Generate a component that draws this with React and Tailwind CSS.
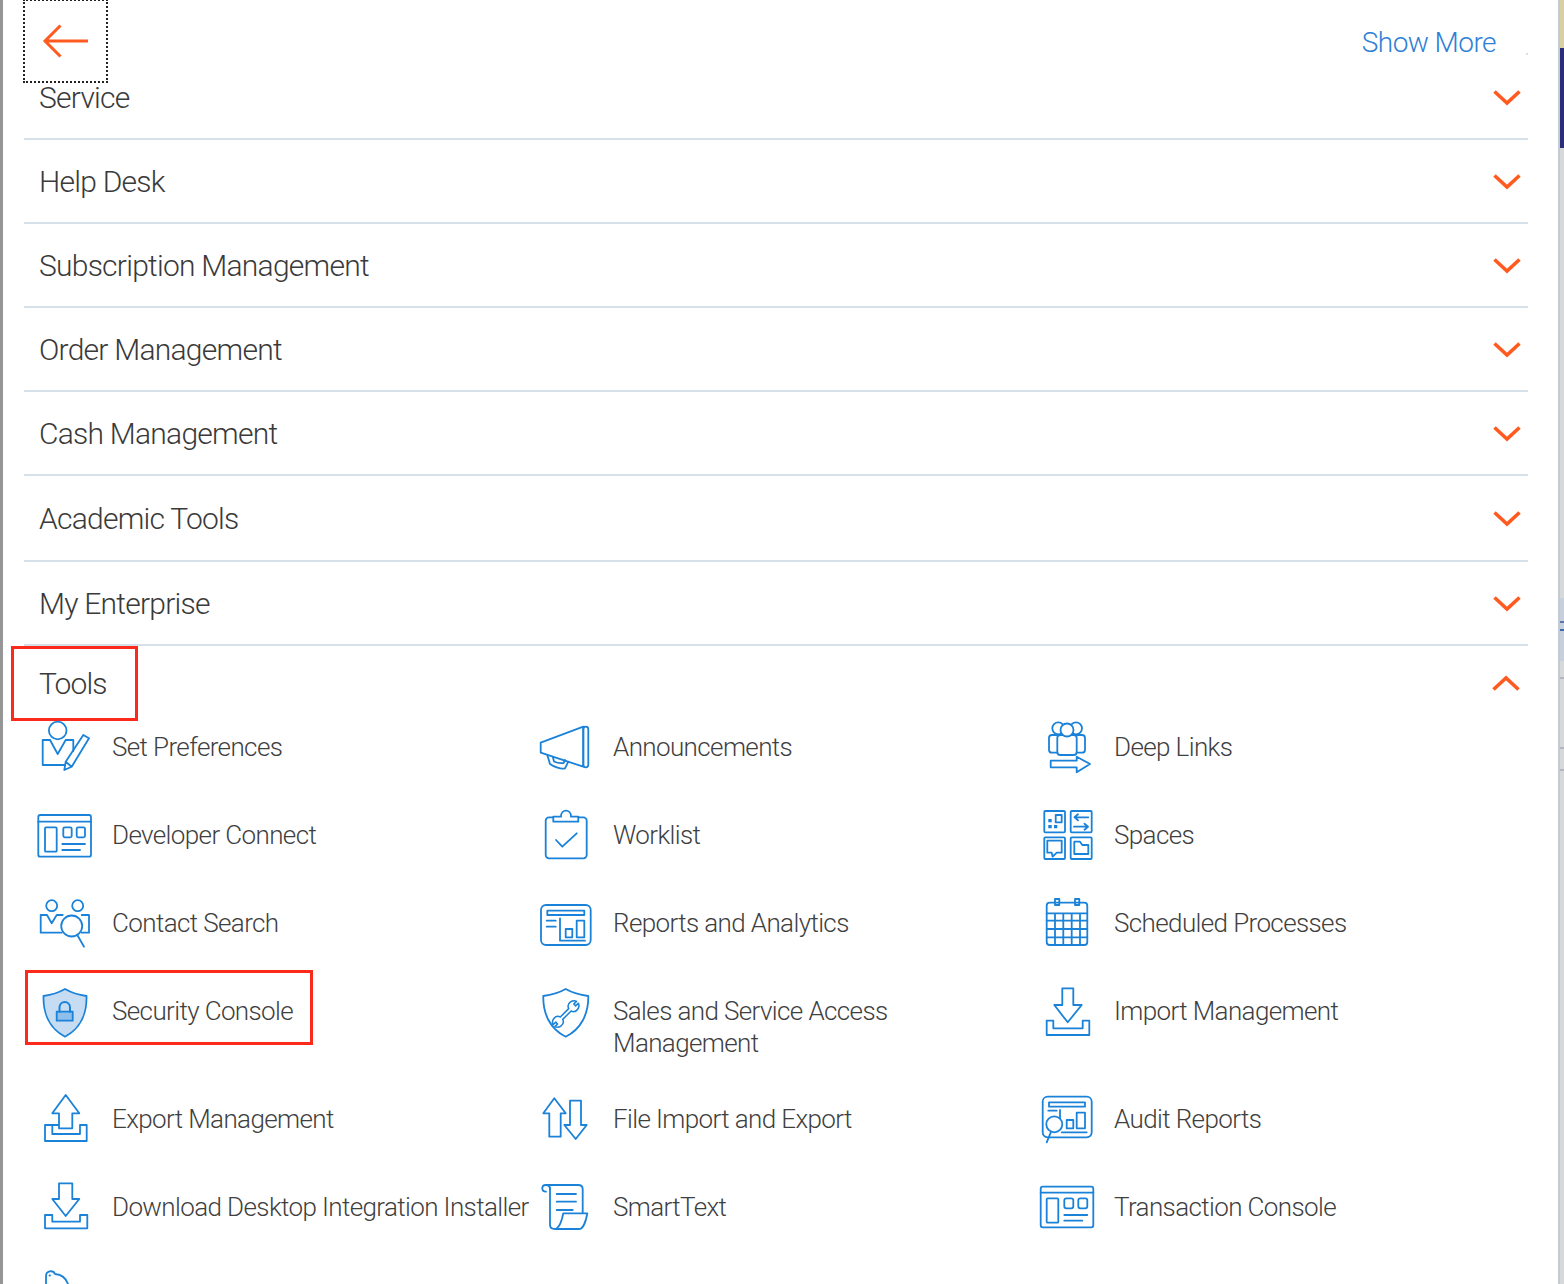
import React from 'react';

const BLUE = '#1a82d8';

const SECTIONS = ['Service', 'Help Desk', 'Subscription Management', 'Order Management', 'Cash Management', 'Academic Tools', 'My Enterprise'];

const COL_X = [29, 530, 1031];
const ROW_Y = [719, 807, 895, 983, 1091, 1179, 1267];

// paths are in page px, each svg just windows onto its own cell
const ICONS = {
  prefs: (
    <>
      <circle cx="57.7" cy="730.5" r="8.8" />
      <path d="M66 740h7.3v11M50 740h-7.3v25H65M50 740l7.7 14 8-14" />
      <path d="M64.3 770l1.4-8.3L83.3 735l5.7 3.3-17.3 28.4zM65.7 761.7l6 5" />
    </>
  ),
  console: (
    <>
      <rect x="38.3" y="815" width="52.7" height="41.7" rx="2" />
      <path d="M38.3 821.7H91" />
      <rect x="45" y="827.3" width="11.7" height="24.4" rx="1" />
      <rect x="63.3" y="827.3" width="8.4" height="10" rx="1.5" />
      <rect x="76.7" y="827.3" width="8.3" height="10" rx="1.5" />
      <path d="M62.3 844H85M62.3 850H80" />
    </>
  ),
  contact: (
    <>
      <circle cx="51.7" cy="905.7" r="5.5" />
      <circle cx="77.7" cy="905.7" r="5.5" />
      <path d="M61.7 932.7h-21V915H47l4.7 8.3 5-8.3h6M81.7 915H89v17.7h-7.3" />
      <circle cx="71.7" cy="926" r="10.5" />
      <path d="M77.3 935l6.7 11.7" />
    </>
  ),
  security: (
    <>
      <path fill="#c5dcf2" d="M65 989c-7 4-14 6-21.5 7-.5 18 6.500 33 21.500 40.700 15-7.700 22-22.700 21.500-40.700-7.500-1-14.500-3-21.500-7z" />
      <rect x="56.700" y="1011.700" width="16" height="9" fill="#8fc0ec" />
      <path strokeWidth="2" d="M59.500 1011.700v-4c0-7.500 10.500-7.500 10.500 0v4" />
    </>
  ),
  exportFile: (
    <path d="M65.700 1095l-13.400 18.300H59v15h13.300v-15h7zM59 1125H45v16h41.700v-16H80v9H52.300v-9" />
  ),
  download: (
    <path d="M59 1183.300h13.300V1199h7L65.700 1216 52.300 1199H59zM52.300 1215H45v13.300h42.300V1215H80v6.700H52.300z" />
  ),
  partial: (
    <path d="M46 1284v-8c0-5 7-6.500 9-2 6 .5 11 4 13 10M49.500 1275.500h.5" />
  ),
  announce: (
    <>
      <path d="M583.300 726.700l-42.600 16v10l42.600 14z" />
      <rect x="583.300" y="726.700" width="5" height="40.600" rx="2.500" />
      <path d="M547.300 755l2.700 9c4 3 11 5.500 15 4.300l3.300-6.600M553 757.500l1 4c3 1.500 6.500 2 9.500 1.500l1.500-3" />
    </>
  ),
  worklist: (
    <>
      <path d="M553.300 817.300H549a3.300 3.300 0 00-3.300 3.300v34.400a3.300 3.300 0 003.300 3.300h34.400a3.300 3.300 0 003.300-3.300v-34.400a3.300 3.300 0 00-3.300-3.300h-5.100" />
      <path d="M553.300 821.700v-5h7.700c0-8 10-8 10 0h7.300v5z" />
      <path d="M556 840l6.300 6.700 14.400-13.400" />
    </>
  ),
  reports: (
    <>
      <rect x="541" y="905" width="49.700" height="40" rx="5" />
      <path d="M547.300 910.700h37v4.300h-37zM546.700 920.700h9M546.700 926.700h9M560 918.300v22.400h25" />
      <path d="M565.700 929h6.600v8.300h-6.600zM576.700 920.700h7.600v16.600h-7.600z" />
    </>
  ),
  wrench: (
    <>
      <path d="M565.700 989c-7 4-14.500 6-22.400 7-.5 18 7 33 22.400 40.700 15.400-7.700 22.900-22.700 22.600-40.700-8-1-15.600-3-22.600-7z" />
      <g transform="translate(565.700 1014) rotate(45) scale(.85)">
        <path d="M-2-7V7c-3 1-4.500 4-4 7 .5 3 3 5 4.500 5.500V15h3v4.500c1.500-.5 4-2.500 4.500-5.500.5-3-1-6-4-7V-7c3-1 4.500-4 4-7-.5-3-3-5-4.500-5.500V-15h-3v-4.500c-1.500.5-4 2.500-4.500 5.500-.5 3 1 6 4 7z" />
      </g>
    </>
  ),
  fileIo: (
    <path d="M554.300 1098.300l-11 15h6v23.400h11.400v-23.400h5zM570 1100.700h11V1125h5.700l-11 14-11.400-14h5.700z" />
  ),
  scroll: (
    <>
      <path d="M546 1191.700c-5 0-5-6.700 0-6.700h32c3 0 4.700 1.300 4.700 4v24.300M550 1188v37c0 2.500 2 4 5 4h24c4 0 7-8 8.300-15.700h-24c-1 5-3 13-6.600 15" />
      <path d="M546 1185c3 0 4 2 4 4M556.700 1194H576M556.700 1201.700H576M556.700 1210h16" />
    </>
  ),
  deepLinks: (
    <>
      <circle cx="1058.300" cy="728.300" r="6" />
      <circle cx="1076" cy="728.300" r="6" />
      <rect x="1057.300" y="735" width="19.400" height="20" rx="3" fill="#fff" />
      <circle cx="1067" cy="730" r="6.500" fill="#fff" />
      <path d="M1057.300 752.700H1052a3 3 0 01-3-3V738a3 3 0 013-3h5.300M1076.700 735h5.300a3 3 0 013 3v11.700a3 3 0 01-3 3h-5.300" />
      <path d="M1076.700 760.700h-26v6.600h26v5l13.300-8.300-13.300-7.300z" />
    </>
  ),
  spaces: (
    <>
      <rect x="1044.300" y="811" width="20.700" height="21.300" rx="1" />
      <rect x="1070.700" y="811" width="21" height="21.300" rx="1" />
      <rect x="1044.300" y="837.300" width="20.700" height="21.700" rx="1" />
      <rect x="1070.700" y="837.300" width="21" height="21.700" rx="1" />
      <path d="M1055.700 815h6v7.300h-6z" />
      <path fill={BLUE} stroke="none" d="M1048.300 819h3.400v3.300h-3.400zM1048.300 825h3.400v3.300h-3.400zM1054 825h3.300v3.300H1054z" />
      <path d="M1088.300 817.300H1074.500l3.500-3M1074.500 817.300l3.500 3M1074 826.700h14l-3.500-3M1088 826.700l-3.500 3" />
      <path d="M1047.300 840.700h14.400v12h-5l-4 4-1-4h-4.400z" />
      <path d="M1074.300 841.700h5.700l2.300 3.300h6v9h-14z" />
    </>
  ),
  calendar: (
    <>
      <rect x="1046.700" y="902.700" width="40.600" height="42.300" rx="3" />
      <path d="M1055 899h4.300v6H1055zM1075 899h4.300v6H1075z" />
      <path d="M1046.700 913.300h40.600M1046.700 920.700h40.600M1046.700 929h40.600M1046.700 937.300h40.600M1055 913.300V945M1063.300 913.300V945M1071.700 913.300V945M1080 913.300V945" />
    </>
  ),
  importFile: (
    <path d="M1062.300 988.300h11V1005h8.400l-14 17.300-13.400-17.300h8zM1053.300 1020.700h-6.600v14.300h42.600v-14.300h-6.600v7.600h-29.400z" />
  ),
  audit: (
    <>
      <rect x="1042.700" y="1096.700" width="49" height="40.600" rx="5" />
      <path d="M1049 1102.300h36v4.400h-36zM1048.300 1110.700h8.400M1060 1110v8M1066.700 1120h6.600v8.300h-6.600zM1076.700 1112.700h8.300v15.600h-8.300zM1061.700 1132.300h25" />
      <circle cx="1054.300" cy="1124.300" r="8" fill="#fff" />
      <path d="M1050.700 1132.700l-4 9.600" />
    </>
  ),
  transaction: (
    <>
      <rect x="1040.700" y="1186.700" width="52.600" height="40.600" rx="2" />
      <path d="M1040.700 1192.700h52.600" />
      <rect x="1046.700" y="1198.300" width="11.600" height="24.400" rx="1" />
      <rect x="1064.300" y="1198.300" width="9" height="10" rx="2" />
      <rect x="1078.300" y="1198.300" width="9" height="10" rx="2" />
      <path d="M1064.300 1215h23M1064.300 1220.700h18" />
    </>
  ),
};

const TOOLS = [
  { icon: 'prefs', lines: ['Set Preferences'] },
  { icon: 'announce', lines: ['Announcements'] },
  { icon: 'deepLinks', lines: ['Deep Links'] },
  { icon: 'console', lines: ['Developer Connect'] },
  { icon: 'worklist', lines: ['Worklist'] },
  { icon: 'spaces', lines: ['Spaces'] },
  { icon: 'contact', lines: ['Contact Search'] },
  { icon: 'reports', lines: ['Reports and Analytics'] },
  { icon: 'calendar', lines: ['Scheduled Processes'] },
  { icon: 'security', lines: ['Security Console'], marked: true },
  { icon: 'wrench', lines: ['Sales and Service Access', 'Management'] },
  { icon: 'importFile', lines: ['Import Management'] },
  { icon: 'exportFile', lines: ['Export Management'] },
  { icon: 'fileIo', lines: ['File Import and Export'] },
  { icon: 'audit', lines: ['Audit Reports'] },
  { icon: 'download', lines: ['Download Desktop Integration Installer'] },
  { icon: 'scroll', lines: ['SmartText'] },
  { icon: 'transaction', lines: ['Transaction Console'] },
  { icon: 'partial', lines: [] },
];

function ToolIcon({ name, col, row }) {
  return (
    <svg
      width="72"
      height="56"
      viewBox={`${COL_X[col]} ${ROW_Y[row]} 72 56`}
      fill="none"
      stroke={BLUE}
      strokeWidth="1.8"
      strokeLinejoin="round"
      strokeLinecap="round"
      className="shrink-0 overflow-visible"
    >
      {ICONS[name]}
    </svg>
  );
}

function Chevron({ up }) {
  return (
    <svg width="28" height="16" viewBox="0 0 28 16" fill="none" stroke="#ff5a1f" strokeWidth="3.6" className={up ? '' : 'mt-[2px]'}>
      <path d={up ? 'M1.500 14.500L14 3l12.500 11.500' : 'M1.500 1.500L14 13 26.500 1.500'} />
    </svg>
  );
}

function SectionRow({ label, tall }) {
  return (
    <div className={`flex items-center justify-between pl-[15px] pr-[7px] border-b-2 border-[#d6e0e8] ${tall ? 'h-[86px]' : 'h-[84px]'}`}>
      <span className="text-[30px] tracking-[-0.75px] text-[#3a3a3a]">{label}</span>
      <Chevron />
    </div>
  );
}

// the thin sliver of the page behind the panel
function EdgeStrip() {
  return (
    <div className="w-[6px] shrink-0 border-l-2 border-[#c2cad4] flex flex-col">
      <div className="h-[48px] bg-[#d9cfa0]" />
      <div className="h-[100px] bg-[#2b2d78]" />
      <div className="h-[450px] bg-[#d8d8d8]" />
      <div className="h-[63px] bg-[#c6cfdb] flex flex-col">
        <div className="h-[23px]" />
        <div className="h-[2px] bg-[#5a76ad]" />
        <div className="h-[6px]" />
        <div className="h-[2px] bg-[#3f68b0]" />
      </div>
      <div className="h-[16px] bg-[#d8d8d8]" />
      <div className="h-[2px] bg-[#b5b5bd]" />
      <div className="h-[68px] bg-[#d8d8d8]" />
      <div className="h-[2px] bg-[#b5b5bd]" />
      <div className="h-[20px] bg-[#d8d8d8]" />
      <div className="h-[2px] bg-[#b5b5bd]" />
      <div className="flex-1 bg-[#d8d8d8]" />
    </div>
  );
}

export default function App() {
  return (
    <div className="flex h-[1284px] overflow-hidden bg-white font-['Roboto',sans-serif] font-light">
      <div className="flex-1 min-w-0 border-l-[3px] border-[#969696]">
        {/* top bar */}
        <div className="relative h-[56px]">
          <button className="absolute left-[20px] -top-px w-[85px] h-[84px] z-10 border-2 border-dotted border-[#222] flex items-center justify-center">
            <svg width="48" height="34" viewBox="0 0 48 34" fill="none" stroke="#ff5a1f" strokeWidth="3">
              <path d="M46 17H3M18.500 1.500L3 17l15.500 15.500" />
            </svg>
          </button>
          <a className="absolute right-[62px] top-[23px] text-[28px] leading-[40px] tracking-[-0.55px] text-[#2f7fd6]">Show More</a>
          <div className="absolute right-[30px] top-[53px] w-[2px] h-[2px] bg-[#d6e0e8]" />
        </div>

        <div className="ml-[21px] mr-[30px]">
          {SECTIONS.map((s, i) => <SectionRow key={s} label={s} tall={i === 5} />)}

          <div className="relative flex items-center justify-between h-[73px] pl-[15px] pr-[8px]">
            <div className="absolute -left-[13px] top-0 w-[127px] h-[75px] border-[3px] border-[#fb2a1a]" />
            <span className="pt-[2px] text-[30px] tracking-[-0.9px] text-[#3a3a3a]">Tools</span>
            <Chevron up />
          </div>

          <div className="grid grid-cols-[501px_501px_1fr]">
            {TOOLS.map((t, i) => (
              <div key={i} className="relative flex items-start min-h-[88px] pl-[5px] gap-[11px]">
                {t.marked && <div className="absolute left-[1px] -top-[13px] w-[288px] h-[75px] border-[3px] border-[#fb2a1a]" />}
                <ToolIcon name={t.icon} col={i % 3} row={Math.floor(i / 3)} />
                <div className="pt-3 pb-8 text-[26px] leading-[32px] tracking-[-0.62px] text-[#3f3f3f] whitespace-nowrap">
                  {t.lines.map(l => <div key={l}>{l}</div>)}
                </div>
              </div>
            ))}
          </div>
        </div>
      </div>
      <EdgeStrip />
    </div>
  );
}
